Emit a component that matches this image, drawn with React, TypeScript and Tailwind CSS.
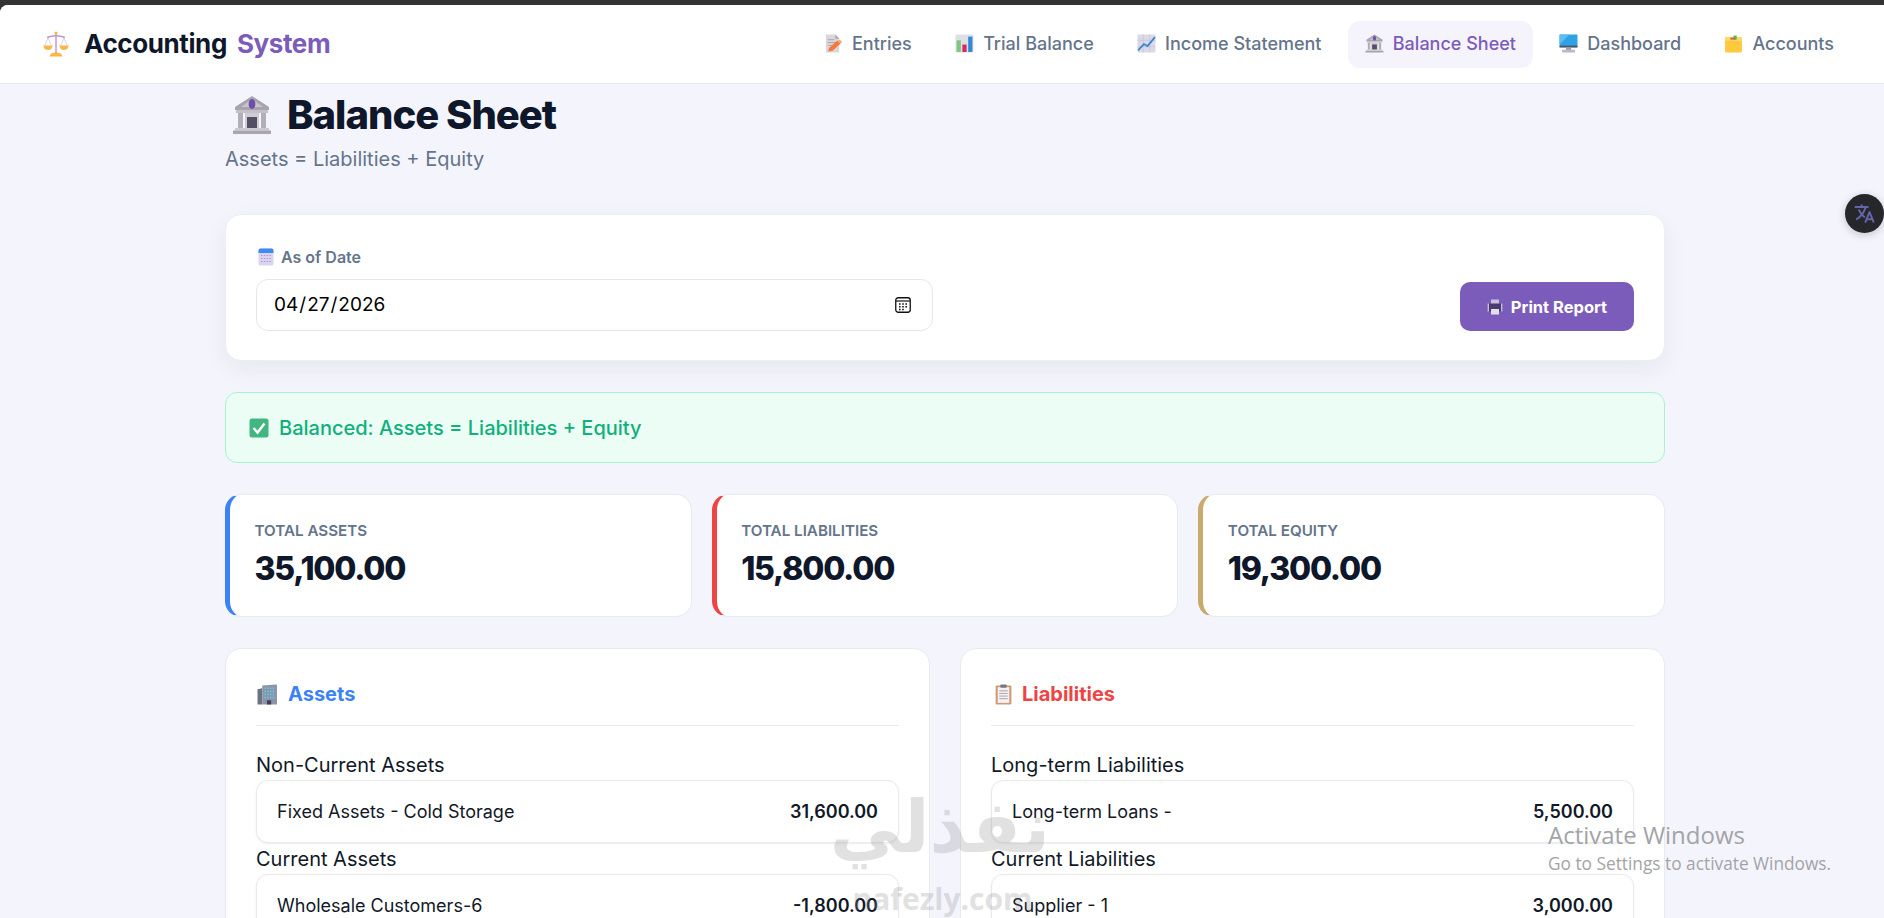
import { IoLanguage } from "react-icons/io5";

function ScalesIcon({ className }: { className?: string }) {
  return (
    <svg className={className} viewBox="0 0 26 26" fill="none">
      <rect x="12.2" y="1" width="1.6" height="21" fill="#c9a0d8" />
      <circle cx="13" cy="2" r="1.6" fill="#f5b942" />
      <path d="M4 6.5 Q13 3 22 6.5" stroke="#b79bd0" strokeWidth="1.6" />
      <path d="M5 7 L1.5 15 M5 7 L8.5 15 M21 7 L17.5 15 M21 7 L24.5 15" stroke="#d8c4e4" strokeWidth="0.8" />
      <path d="M0.5 14.5 H9.5 Q9 19 5 19 Q1 19 0.5 14.5Z" fill="#f7b84b" />
      <path d="M16.5 14.5 H25.5 Q25 19 21 19 Q17 19 16.5 14.5Z" fill="#f7b84b" />
      <path d="M6.5 25.5 Q7 21.5 13 21.5 Q19 21.5 19.5 25.5Z" fill="#f9b840" />
    </svg>
  );
}

function BankIcon({ className }: { className?: string }) {
  return (
    <svg className={className} viewBox="0 0 40 40" fill="none">
      <path d="M20 1 L37 12 V15 H3 V12Z" fill="#a8a3ae" />
      <path d="M20 4 L31 12 H9Z" fill="#c9c5cf" />
      <ellipse cx="20" cy="9" rx="3.4" ry="5" fill="#6d4fa8" />
      <rect x="4" y="15" width="32" height="3" fill="#c4c0ca" />
      <rect x="6" y="18" width="5" height="15" fill="#b3afb9" />
      <rect x="13" y="18" width="14" height="15" fill="#d0ccd5" />
      <rect x="29" y="18" width="5" height="15" fill="#b3afb9" />
      <rect x="15" y="22" width="10" height="11" fill="#544f63" />
      <rect x="3" y="33" width="34" height="2.5" fill="#cdc9d2" />
      <rect x="1" y="35.5" width="38" height="3.5" fill="#a9a5af" />
    </svg>
  );
}

function MemoIcon({ className }: { className?: string }) {
  return (
    <svg className={className} viewBox="0 0 18 20" fill="none">
      <path d="M1 0.5 H11 L15 5 V19.5 H1Z" fill="#d9d6dc" />
      <path d="M11 0.5 L15 5 H11Z" fill="#a9a5ae" />
      <path d="M3 6 H10 M3 9 H12 M3 12 H8" stroke="#a9a5ae" strokeWidth="1" />
      <path d="M3.5 18.5 L4.5 14.5 L13 6.8 L16.5 10 L8 17.5Z" fill="#f4793b" />
      <path d="M14 7 L15.5 5.8 L18 8.4 L16.5 10Z" fill="#f7a27c" />
    </svg>
  );
}

function BarsIcon({ className }: { className?: string }) {
  return (
    <svg className={className} viewBox="0 0 18 18" fill="none">
      <rect x="0.5" y="0.5" width="17" height="17" rx="1.5" fill="#dcdfe6" />
      <rect x="1.5" y="6" width="4" height="11" fill="#7fc77c" />
      <rect x="7" y="10" width="4" height="7" fill="#d9285f" />
      <rect x="12.5" y="2.5" width="4" height="14.5" fill="#2f88d8" />
    </svg>
  );
}

function LineIcon({ className }: { className?: string }) {
  return (
    <svg className={className} viewBox="0 0 18 18" fill="none">
      <rect x="0.5" y="0.5" width="17" height="17" rx="1" fill="#dcd9e6" />
      <path d="M0.5 6 H17.5 M0.5 12 H17.5 M6 0.5 V17.5 M12 0.5 V17.5" stroke="#c4c0d2" strokeWidth="0.6" />
      <path d="M1 15.5 L6.5 9.5 L10 11.5 L17 3" stroke="#3a86d4" strokeWidth="1.7" />
    </svg>
  );
}

function DesktopIcon({ className }: { className?: string }) {
  return (
    <svg className={className} viewBox="0 0 18 18" fill="none">
      <rect x="0.5" y="0.5" width="17" height="12" rx="0.8" fill="#2fa2e6" />
      <path d="M0.5 12.5 V0.5 H10 L0.5 10Z" fill="#5dbcf0" />
      <rect x="0.5" y="11" width="17" height="1.8" fill="#4b5563" />
      <rect x="6.5" y="12.8" width="5" height="2.5" fill="#9ca3af" />
      <rect x="3" y="15" width="12" height="2.5" rx="0.5" fill="#b6bac2" />
    </svg>
  );
}

function NoteIcon({ className }: { className?: string }) {
  return (
    <svg className={className} viewBox="0 0 18 18" fill="none">
      <rect x="1" y="3" width="16" height="14.5" rx="1.5" fill="#fcc93f" />
      <rect x="1" y="3" width="16" height="3.5" fill="#fbd968" />
      <rect x="9" y="1.5" width="3" height="4" fill="#5bb450" />
      <rect x="6" y="3.5" width="4" height="1.8" fill="#e0563f" />
    </svg>
  );
}

function CalendarIcon({ className }: { className?: string }) {
  return (
    <svg className={className} viewBox="0 0 16 18" fill="none">
      <rect x="0.5" y="0.5" width="15" height="17" rx="2" fill="#dcd3f0" />
      <path d="M0.5 5 V2.5 Q0.5 0.5 2.5 0.5 H13.5 Q15.5 0.5 15.5 2.5 V5Z" fill="#3b8bf0" />
      <path d="M3 7.5 H13 M3 10.5 H13 M3 13.5 H13" stroke="#a895d4" strokeWidth="1.2" strokeDasharray="1.4 1.4" />
    </svg>
  );
}

function PickerIcon({ className }: { className?: string }) {
  return (
    <svg className={className} viewBox="0 0 16 16" fill="none">
      <rect x="0.75" y="0.75" width="14.5" height="14.5" rx="2.5" stroke="#111" strokeWidth="1.3" />
      <path d="M1 4 H15" stroke="#111" strokeWidth="1.2" />
      <path d="M4 7 H5.6 M7.2 7 H8.8 M10.4 7 H12 M4 9.8 H5.6 M7.2 9.8 H8.8 M10.4 9.8 H12 M4 12.4 H5.6 M7.2 12.4 H8.8" stroke="#111" strokeWidth="1.5" />
    </svg>
  );
}

function PrinterIcon({ className }: { className?: string }) {
  return (
    <svg className={className} viewBox="0 0 16 16" fill="none">
      <rect x="4" y="0.5" width="8" height="5" fill="#c9bfd8" />
      <rect x="0.5" y="4.5" width="15" height="8" rx="1" fill="#4a3a70" />
      <rect x="0.5" y="4.5" width="1.5" height="8" fill="#c9bfd8" />
      <rect x="14" y="4.5" width="1.5" height="8" fill="#c9bfd8" />
      <rect x="4" y="10" width="8" height="5.5" fill="#e4deee" />
    </svg>
  );
}

function CheckIcon({ className }: { className?: string }) {
  return (
    <svg className={className} viewBox="0 0 20 20" fill="none">
      <rect x="0.5" y="0.5" width="19" height="19" rx="2.5" fill="#43b581" />
      <path d="M4.5 10 L8.5 14.5 L15.5 5.5" stroke="#fff" strokeWidth="2.4" />
    </svg>
  );
}

function BuildingIcon({ className }: { className?: string }) {
  return (
    <svg className={className} viewBox="0 0 20 20" fill="none">
      <path d="M0.5 5 L5 4 V19.5 H0.5Z" fill="#6b7280" />
      <path d="M5 1.5 L19 0.5 V19.5 H5Z" fill="#8d93a6" />
      <path d="M7 4 H17 M7 7 H17 M7 10 H17 M7 13 H17" stroke="#63c4e8" strokeWidth="1.5" strokeDasharray="1.6 1" />
      <rect x="9.5" y="15.5" width="4" height="4" fill="#433e55" />
    </svg>
  );
}

function ClipboardIcon({ className }: { className?: string }) {
  return (
    <svg className={className} viewBox="0 0 16 20" fill="none">
      <rect x="0.5" y="1.5" width="15" height="18" rx="1" fill="#cf9a72" />
      <rect x="2.5" y="3" width="11" height="15" fill="#f3f1f2" />
      <rect x="5" y="0.5" width="6" height="3" rx="0.8" fill="#7b7680" />
      <path d="M4 6.5 H12 M4 9 H12 M4 11.5 H12 M4 14 H12" stroke="#a6a2aa" strokeWidth="0.9" />
    </svg>
  );
}

const navItems = [
  { label: "Entries", icon: MemoIcon },
  { label: "Trial Balance", icon: BarsIcon },
  { label: "Income Statement", icon: LineIcon },
  { label: "Balance Sheet", icon: BankIcon, active: true },
  { label: "Dashboard", icon: DesktopIcon },
  { label: "Accounts", icon: NoteIcon },
];

const totals = [
  { label: "Total Assets", value: "35,100.00", border: "border-l-[#3b82f6]" },
  { label: "Total Liabilities", value: "15,800.00", border: "border-l-[#ef4444]" },
  { label: "Total Equity", value: "19,300.00", border: "border-l-[#c9a96e]" },
];

function Row({ label, value }: { label: string; value: string }) {
  return (
    <div className="h-[63px] flex items-center justify-between px-[20px] bg-white border border-[#e8eaf0] rounded-xl shadow-[0_1px_2px_rgba(15,23,42,0.08)] text-[#111827]">
      <span className="text-[18px]">{label}</span>
      <span className="text-[18px] font-semibold">{value}</span>
    </div>
  );
}

function Panel({
  title,
  titleColor,
  icon,
  groups,
}: {
  title: string;
  titleColor: string;
  icon: React.ReactNode;
  groups: { heading: string; rows: { label: string; value: string }[] }[];
}) {
  return (
    <section className="bg-white border border-[#e8eaf0] rounded-2xl px-[30px] pt-[31px] pb-8">
      <div className="flex items-center gap-[10px] pb-[17px] border-b border-[#e8eaf0] h-[46px]">
        {icon}
        <h2 className={`text-[20px] leading-7 font-bold ${titleColor}`}>{title}</h2>
      </div>
      <div className="pt-[25px] flex flex-col gap-[2px]">
        {groups.map((g) => (
          <div key={g.heading}>
            <h3 className="text-[20px] leading-7 mb-[1px] text-[#111827]">{g.heading}</h3>
            {g.rows.map((r) => (
              <Row key={r.label} label={r.label} value={r.value} />
            ))}
          </div>
        ))}
      </div>
    </section>
  );
}

export default function App() {
  return (
    <div className="relative h-[918px] overflow-hidden bg-[#333333] pt-[5px] font-['Inter',sans-serif]">
      <div className="h-full overflow-hidden rounded-tl-lg bg-[#f4f5fc]">
        <nav className="h-[79px] flex items-center justify-between pl-[43px] pr-[33px] bg-white border-b border-[#e5e7eb]">
          <div className="flex items-center gap-[15px]">
            <ScalesIcon className="w-[26px] h-[26px]" />
            <div className="-mt-[2px] text-[26px] font-bold flex gap-[10px] tracking-[-0.4px]">
              <span className="text-[#0f172a]">Accounting</span>
              <span className="text-[#7c5cba]">System</span>
            </div>
          </div>
          <div className="flex items-center gap-[9.3px]">
            {navItems.map((item) => (
              <a
                key={item.label}
                className={`h-[47px] pb-[1px] flex items-center gap-[9px] px-[17px] rounded-xl text-[18px] font-medium ${
                  item.active ? "bg-[#f5f3fc] text-[#7c5cba]" : "text-[#64748b]"
                }`}
              >
                <item.icon className="w-[19px] h-[19px]" />
                {item.label}
              </a>
            ))}
          </div>
        </nav>

        <main className="ml-[225px] w-[1440px] pt-[7px]">
          <h1 className="flex items-center gap-[15px] pl-[7px] text-[40px] leading-[48px] font-extrabold tracking-[-1px] text-[#0f172a]">
            <BankIcon className="w-[40px] h-[40px]" />
            Balance Sheet
          </h1>
          <p className="mt-[6px] text-[20px] leading-7 text-[#64748b]">Assets = Liabilities + Equity</p>

          <div className="mt-[41px] h-[147px] flex items-end justify-between bg-white border border-[#eceef5] rounded-2xl px-[30px] pb-[29px] shadow-[0_8px_24px_rgba(15,23,42,0.06)]">
            <div className="w-[677px]">
              <label className="flex items-center gap-[7px] mb-3 text-[16px] leading-5 font-semibold text-[#64748b]">
                <CalendarIcon className="w-[16px] h-[18px] ml-[2px]" />
                As of Date
              </label>
              <div className="relative">
                <input
                  type="date"
                  defaultValue="2026-04-27"
                  className="w-full h-[52px] pl-[16px] pr-[20px] bg-white border border-[#e5e7eb] rounded-xl text-[19px] text-black [&::-webkit-calendar-picker-indicator]:opacity-0"
                />
                <PickerIcon className="absolute right-[22px] top-[18px] w-4 h-4 pointer-events-none" />
              </div>
            </div>
            <button className="w-[174px] h-[49px] pt-[1px] flex items-center justify-center gap-2 bg-[#7c5cba] rounded-[10px] text-[16.5px] font-bold text-white">
              <PrinterIcon className="w-4 h-4" />
              Print Report
            </button>
          </div>

          <div className="mt-[31px] h-[71px] flex items-center gap-[10px] pl-[23px] bg-[#ecfdf5] border border-[#a7f3d0] rounded-xl text-[20px] font-medium text-[#10b07c]">
            <CheckIcon className="w-5 h-5" />
            Balanced: Assets = Liabilities + Equity
          </div>

          <div className="mt-[31px] grid grid-cols-3 gap-5">
            {totals.map((t) => (
              <div
                key={t.label}
                className={`h-[123px] bg-white border border-[#e8eaf0] border-l-[5px] ${t.border} rounded-2xl pl-[24.5px] pt-[26px]`}
              >
                <div className="text-[15.2px] leading-5 font-semibold uppercase text-[#64748b]">{t.label}</div>
                <div className="mt-[10px] text-[32px] leading-9 font-extrabold tracking-[-1.2px] text-[#0f172a]">{t.value}</div>
              </div>
            ))}
          </div>

          <div className="mt-[31px] grid grid-cols-2 gap-[30px]">
            <Panel
              title="Assets"
              titleColor="text-[#3b82f6]"
              icon={<BuildingIcon className="w-[21px] h-[21px] ml-[1px]" />}
              groups={[
                { heading: "Non-Current Assets", rows: [{ label: "Fixed Assets - Cold Storage", value: "31,600.00" }] },
                { heading: "Current Assets", rows: [{ label: "Wholesale Customers-6", value: "-1,800.00" }] },
              ]}
            />
            <Panel
              title="Liabilities"
              titleColor="text-[#ef4444]"
              icon={<ClipboardIcon className="w-[17px] h-[21px] ml-[4px]" />}
              groups={[
                { heading: "Long-term Liabilities", rows: [{ label: "Long-term Loans -", value: "5,500.00" }] },
                { heading: "Current Liabilities", rows: [{ label: "Supplier - 1", value: "3,000.00" }] },
              ]}
            />
          </div>
        </main>
      </div>

      {/* translate widget */}
      <div className="absolute right-0 top-[194px] w-[39px] h-[39px] rounded-full bg-[#26272b] flex items-center justify-center shadow-[0_2px_8px_rgba(0,0,0,0.2)]">
        <IoLanguage className="w-[23px] h-[23px] text-[#6366a8]" />
      </div>

      {/* watermark */}
      <div className="absolute left-[835px] top-[787px] w-[215px] pointer-events-none text-center text-[#8b8b8b] opacity-25 font-bold">
        <div dir="rtl" className="font-['DejaVu_Sans',sans-serif] text-[72px] leading-[80px]">نفذلي</div>
        <div className="mt-[14px] font-['Open_Sans',sans-serif] text-[30px] leading-9">nafezly.com</div>
      </div>

      {/* windows activation notice */}
      <div className="absolute left-[1548px] top-[820px] pointer-events-none font-['Open_Sans',sans-serif] text-[#a3a3a8]">
        <div className="text-[24px] leading-[30px]">Activate Windows</div>
        <div className="mt-[2px] text-[17.3px] leading-6">Go to Settings to activate Windows.</div>
      </div>
    </div>
  );
}
